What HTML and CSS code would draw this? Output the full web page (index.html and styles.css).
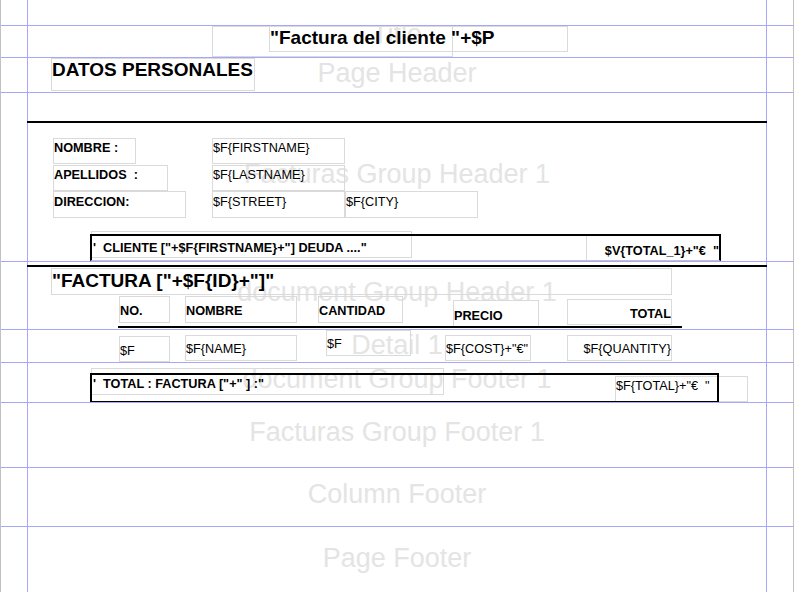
FILE: index.html
```html
<!DOCTYPE html>
<html>
<head>
<meta charset="utf-8">
<title>Report designer</title>
<link rel="stylesheet" href="styles.css">
</head>
<body>
<div class="page">
  <div class="band h-margin"><div class="mg"></div><div class="cell"></div><div class="mg"></div></div>

  <div class="band h-title"><div class="mg"></div>
    <div class="cell">
      <span class="label title-label">Title</span>
      <div class="fld t-box1"></div>
      <div class="fld big t-box2">"Factura del cliente "+$P</div>
    </div><div class="mg"></div></div>

  <div class="band h-phead"><div class="mg"></div>
    <div class="cell">
      <span class="label">Page Header</span>
      <div class="fld big t-datos">DATOS PERSONALES</div>
    </div><div class="mg"></div></div>

  <div class="band h-fgh"><div class="mg"></div>
    <div class="cell">
      <span class="label">Facturas Group Header 1</span>
      <div class="rule r-top1"></div>
      <div class="fld b l-nombre">NOMBRE :</div>
      <div class="fld b l-apellidos">APELLIDOS  :</div>
      <div class="fld b l-direccion">DIRECCION:</div>
      <div class="fld f-first">$F{FIRSTNAME}</div>
      <div class="fld f-last">$F{LASTNAME}</div>
      <div class="fld f-street">$F{STREET}</div>
      <div class="fld f-city">$F{CITY}</div>
      <div class="fld b f-cliente">'  CLIENTE ["+$F{FIRSTNAME}+"] DEUDA ...."</div>
      <div class="fld b right f-total1">$V{TOTAL_1}+"€  "</div>
      <div class="frame fr1"></div>
    </div><div class="mg"></div></div>

  <div class="band h-dgh"><div class="mg"></div>
    <div class="cell">
      <span class="label">document Group Header 1</span>
      <div class="rule r-top2"></div>
      <div class="fld big f-factura">"FACTURA ["+$F{ID}+"]"</div>
      <div class="fld b hd-no">NO.</div>
      <div class="fld b hd-nombre">NOMBRE</div>
      <div class="fld b hd-cant">CANTIDAD</div>
      <div class="fld b hd-precio">PRECIO</div>
      <div class="fld b right hd-total">TOTAL</div>
      <div class="rule r-under"></div>
    </div><div class="mg"></div></div>

  <div class="band h-detail"><div class="mg"></div>
    <div class="cell">
      <span class="label">Detail 1</span>
      <div class="fld d-no">$F</div>
      <div class="fld d-name">$F{NAME}</div>
      <div class="fld d-cant">$F</div>
      <div class="fld d-cost">$F{COST}+"€"</div>
      <div class="fld right d-qty">$F{QUANTITY}</div>
    </div><div class="mg"></div></div>

  <div class="band h-dgf"><div class="mg"></div>
    <div class="cell">
      <span class="label">document Group Footer 1</span>
      <div class="fld b f-totfact">'  TOTAL : FACTURA ["+" ] :"</div>
      <div class="fld f-tot">$F{TOTAL}+"€  "</div>
      <div class="frame fr2"></div>
    </div><div class="mg"></div></div>

  <div class="band h-fgf"><div class="mg"></div>
    <div class="cell"><span class="label">Facturas Group Footer 1</span></div>
    <div class="mg"></div></div>

  <div class="band h-cfoot"><div class="mg"></div>
    <div class="cell"><span class="label">Column Footer</span></div>
    <div class="mg"></div></div>

  <div class="band h-pfoot last"><div class="mg"></div>
    <div class="cell"><span class="label">Page Footer</span></div>
    <div class="mg"></div></div>
</div>
</body>
</html>
```
FILE: styles.css
```css
html, body {
  margin: 0;
  padding: 0;
  background: #ffffff;
}

.page {
  width: 794px;
  height: 592px;
  overflow: hidden;
  box-sizing: border-box;
  border-left: 1px solid #c0c0c0;
  border-right: 1px solid #c0c0c0;
  background: #ffffff;
  font-family: "Liberation Sans", Arial, sans-serif;
}

.band {
  display: grid;
  grid-template-columns: 26px 740px 26px;
  border-bottom: 1px solid #a6a6fa;
}

.band.last {
  border-bottom: none;
}

.cell {
  position: relative;
  box-sizing: border-box;
  border-left: 1px solid #a6a6fa;
  border-right: 1px solid #a6a6fa;
  display: flex;
  align-items: center;
  justify-content: center;
  padding-bottom: 6px;
}

.label {
  font-family: "Liberation Sans", Arial, sans-serif;
  font-size: 27px;
  line-height: 31px;
  color: #e4e4e4;
  white-space: nowrap;
}

.h-title .cell {
  overflow: hidden;
}

.title-label {
  position: relative;
  top: -4px;
}

/* band heights */
.h-margin { height: 25px; }
.h-title  { height: 31px; }
.h-phead  { height: 34px; }
.h-fgh    { height: 168px; }
.h-dgh    { height: 67px; }
.h-detail { height: 32px; }
.h-dgf    { height: 39px; }
.h-fgf    { height: 64px; }
.h-cfoot  { height: 58px; }
.h-pfoot  { height: 65px; }
.h-pfoot .cell { padding-bottom: 2px; }

/* report elements */
.fld {
  position: absolute;
  box-sizing: border-box;
  border: 1px solid #dadada;
  font-family: "Liberation Sans", Arial, sans-serif;
  font-size: 12.7px;
  line-height: 15px;
  color: #000;
  white-space: pre;
  overflow: hidden;
  padding-top: 2px;
}

.fld.b { font-weight: bold; }
.fld.right { text-align: right; }
.fld.big {
  font-weight: bold;
  font-size: 19px;
  line-height: 22px;
}

.rule {
  position: absolute;
  background: #000;
  height: 2px;
}

.frame {
  position: absolute;
  box-sizing: border-box;
  border: 2px solid #000;
}

/* Title */
.t-box1 { left: 184px; top: 0; width: 241px; height: 31px; }
.t-box2 { left: 241px; top: 0; width: 299px; height: 26px; padding-top: 0; }

/* Page header */
.t-datos { left: 23px; top: 0; width: 204px; height: 33px; padding-top: 0; }

/* Facturas group header */
.r-top1 { left: -1px; top: 28px; width: 740px; }
.l-nombre    { left: 25px; top: 45px; width: 83px;  height: 26px; }
.l-apellidos { left: 25px; top: 72px; width: 115px; height: 26px; }
.l-direccion { left: 25px; top: 98px; width: 133px; height: 27px; padding-top: 3px; }
.f-first  { left: 184px; top: 45px; width: 133px; height: 26px; }
.f-last   { left: 184px; top: 72px; width: 133px; height: 26px; }
.f-street { left: 184px; top: 98px; width: 133px; height: 27px; padding-top: 3px; }
.f-city   { left: 317px; top: 98px; width: 133px; height: 27px; padding-top: 3px; }
.f-cliente { left: 63px; top: 138px; width: 321px; height: 27px; padding-top: 9px; padding-left: 1px; }
.f-total1  { left: 558px; top: 141px; width: 134px; height: 27px; padding-top: 9px; }
.fr1 { left: 62px; top: 141px; width: 631px; height: 27px; border-bottom: 1px solid #c4c4c4; }

/* document group header */
.r-top2 { left: -1px; top: 3px; width: 740px; }
.f-factura { left: 23px; top: 6px; width: 621px; height: 27px; padding-top: 1px; }
.hd-no     { left: 91px;  top: 34px; width: 51px;  height: 27px; padding-top: 7px; }
.hd-nombre { left: 157px; top: 34px; width: 112px; height: 27px; padding-top: 7px; }
.hd-cant   { left: 290px; top: 34px; width: 85px;  height: 27px; padding-top: 7px; }
.hd-precio { left: 425px; top: 38px; width: 86px;  height: 27px; padding-top: 8px; }
.hd-total  { left: 539px; top: 37px; width: 105px; height: 26px; padding-top: 7px; }
.r-under { left: 90px; top: 64px; width: 564px; }

/* detail */
.d-no   { left: 91px;  top: 6px; width: 51px;  height: 26px; padding-top: 7px; }
.d-name { left: 157px; top: 5px; width: 112px; height: 26px; padding-top: 6px; }
.d-cant { left: 298px; top: 0;   width: 85px;  height: 26px; padding-top: 6px; }
.d-cost { left: 417px; top: 5px; width: 86px;  height: 26px; padding-top: 6px; }
.d-qty  { left: 539px; top: 5px; width: 105px; height: 26px; padding-top: 6px; }

/* document group footer */
.f-totfact { left: 63px; top: 5px; width: 353px; height: 27px; padding-top: 8px; padding-left: 1px; }
.f-tot     { left: 587px; top: 13px; width: 133px; height: 26px; padding-top: 2px; }
.fr2 { left: 62px; top: 10px; width: 629px; height: 29px; border-bottom-width: 1px; }
```
